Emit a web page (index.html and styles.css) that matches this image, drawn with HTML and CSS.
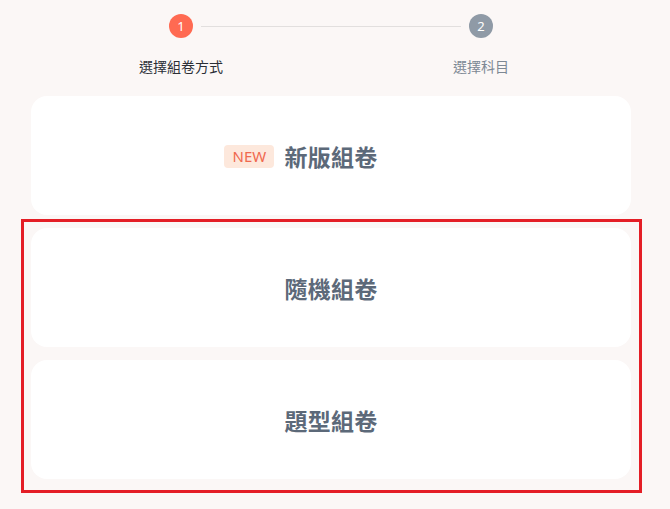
FILE: index.html
```html
<!DOCTYPE html>
<html lang="zh-Hant">
<head>
<meta charset="utf-8">
<link rel="stylesheet" href="styles.css">
</head>
<body>
<div class="page">
  <div class="indicators">
    <span class="dot dot-active">1</span>
    <span class="connector"></span>
    <span class="dot dot-idle">2</span>
  </div>
  <div class="labels">
    <span class="label label-active">選擇組卷方式</span>
    <span class="label label-idle">選擇科目</span>
  </div>
  <div class="cards">
    <div class="card"><span class="badge">NEW</span><span class="card-title">新版組卷</span><span></span></div>
    <div class="card"><span></span><span class="card-title">隨機組卷</span><span></span></div>
    <div class="card"><span></span><span class="card-title">題型組卷</span><span></span></div>
  </div>
  <div class="highlight"></div>
</div>
</body>
</html>
```
FILE: styles.css
```css
html, body {
  margin: 0;
  padding: 0;
  background: #fbf7f6;
}
body {
  font-family: "Noto Sans CJK TC", "Noto Sans", sans-serif;
  width: 670px;
  height: 509px;
  overflow: hidden;
}
.page {
  position: relative;
  padding: 14px 0 0 31px;
  width: 600px;
}
.indicators {
  display: flex;
  align-items: center;
  padding: 0 138px;
}
.dot {
  width: 24px;
  height: 24px;
  border-radius: 50%;
  color: #fff;
  font-family: "Noto Sans", sans-serif;
  font-size: 13px;
  line-height: 24px;
  text-align: center;
  flex: none;
}
.dot-active { background: #ff6a52; }
.dot-idle { background: #8f9aa6; }
.connector {
  flex: 1;
  height: 1px;
  margin: 0 8px;
  background: #e2dfde;
}
.labels {
  display: grid;
  grid-template-columns: 300px 300px;
  margin-top: 18px;
}
.label {
  text-align: center;
  font-size: 14px;
  line-height: 20px;
}
.label-active { color: #2b2f36; }
.label-idle { color: #7d8894; }
.cards {
  display: flex;
  flex-direction: column;
  gap: 13px;
  margin-top: 20px;
}
.card {
  height: 119px;
  background: #ffffff;
  border-radius: 16px;
  display: grid;
  grid-template-columns: 1fr auto 1fr;
  align-items: center;
  column-gap: 10px;
  padding-top: 1px;
  box-sizing: border-box;
}
.card-title {
  font-size: 23px;
  font-weight: 700;
  color: #5c6979;
  letter-spacing: 0.3px;
}
.badge {
  justify-self: end;
  width: 50px;
  height: 23px;
  border-radius: 4px;
  background: #fde8dc;
  color: #f0694f;
  font-family: "Noto Sans", sans-serif;
  font-size: 15px;
  line-height: 23px;
  text-align: center;
}
.highlight {
  position: absolute;
  left: 21px;
  top: 219px;
  width: 621px;
  height: 274px;
  box-sizing: border-box;
  border: 3px solid #e41e26;
}
```
